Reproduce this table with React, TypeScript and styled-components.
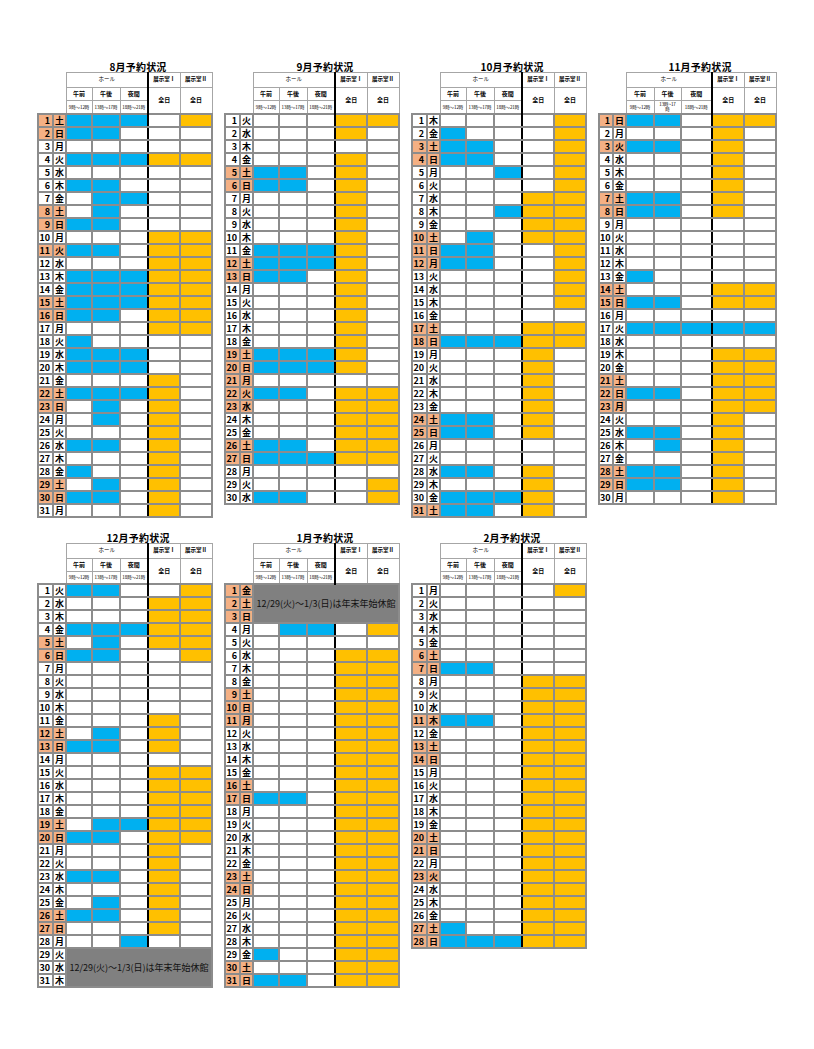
import React from 'react';
import styled, { createGlobalStyle } from 'styled-components';

const GlobalStyle = createGlobalStyle`
  html, body {
    margin: 0;
    padding: 0;
    background: #ffffff;
  }
  body {
    font-family: "Noto Sans CJK JP", "Liberation Sans", sans-serif;
    color: #000;
  }
`;

const BLUE = '#00b0f0';
const ORANGE = '#ffc000';
const HOLIDAY = '#f4b084';
const CLOSED = '#808080';
const GRID = '#8c8c8c';
const HEAD_GRID = '#a6a6a6';

const WEEKDAYS = ['日', '月', '火', '水', '木', '金', '土'];

type Month = {
  label: string;
  start: number; // weekday index of the 1st
  holidays: number[];
  rows: string; // one 5-char code per day: B blue, O orange, . empty, X closed
  wrapAfternoon?: boolean;
  cols?: number[];
};

const COL_WIDTHS = [15, 13, 26, 28, 28, 32, 32];

const MONTHS: Month[] = [
  {
    label: '8月',
    start: 6,
    holidays: [1, 2, 8, 9, 11, 15, 16, 22, 23, 29, 30],
    rows:
      'BBB.O BB... ..... BBBOO ..... BB... .BB.. .B... BB... ...OO ' +
      'BB.OO ...OO BBBOO BBBOO BBBOO BB.OO ...OO B.... BBB.. BBB.. ' +
      '...O. BBBO. .B.O. .B.O. ...O. BB.O. ...O. B..O. .B.O. BB.O. ...O.',
  },
  {
    label: '9月',
    start: 2,
    holidays: [5, 6, 12, 13, 19, 20, 21, 22, 23, 26, 27],
    rows:
      '...OO ...O. ..... ...O. BB.O. BB.O. ...O. ...O. ...O. ...O. ' +
      'BBBO. BBBO. BB.O. ...O. ...O. ...O. ...O. ...O. BBBO. BBBO. ' +
      '..... BB.OO ...OO ...OO ...OO BB.OO BBBOO ..... ....O BB..O',
  },
  {
    label: '10月',
    start: 4,
    holidays: [3, 4, 10, 11, 12, 17, 18, 24, 25, 31],
    rows:
      '....O B...O BB..O BB..O ..B.O ....O ...OO ..BOO ...OO .B.OO ' +
      'BB..O BB..O ....O ....O ....O ..... ...OO BBBOO ...O. ...O. ' +
      '...O. ...O. ...O. BB.O. BB.O. ..... ..... BB.O. ...O. BBBO. BB.O.',
  },
  {
    label: '11月',
    start: 0,
    holidays: [1, 3, 7, 8, 14, 15, 21, 22, 23, 28, 29],
    wrapAfternoon: true,
    cols: [14, 13, 28, 27, 31, 32, 32],
    rows:
      'BB.OO ...O. BB.O. ...O. ...O. ...O. BB.O. BB.O. ..... ..... ' +
      '..... ..... B.... ...OO BB.OO ..... BBBBB ..... ...OO ...OO ' +
      '...OO BB.OO ...OO ...O. BB.O. .B.O. ...O. BB.O. BB.O. ...O.',
  },
  {
    label: '12月',
    start: 2,
    holidays: [5, 6, 12, 13, 19, 20, 26, 27],
    rows:
      'BB..O ...OO ...OO BBBOO .B.OO BB..O ..... ..... ..... ..... ' +
      '...O. .B.O. BB.O. ..... ...OO ...OO ...OO ...OO .BBOO BB.OO ' +
      '...O. ...O. BB.O. ...O. .B.O. BB.O. ...O. ..B.. XXXXX XXXXX XXXXX',
  },
  {
    label: '1月',
    start: 5,
    holidays: [1, 2, 3, 9, 10, 11, 16, 17, 23, 24, 30, 31],
    rows:
      'XXXXX XXXXX XXXXX .BB.O ..... ...OO ...OO ...OO ...OO ...OO ' +
      '...OO ...OO ...OO ...OO ...OO ...OO BB.OO ...OO ...OO ...OO ' +
      '...OO ...OO ...OO ...OO ...OO ...OO ...OO ...OO B..OO ...OO BB.OO',
  },
  {
    label: '2月',
    start: 1,
    holidays: [6, 7, 11, 13, 14, 20, 21, 23, 27, 28],
    rows:
      '....O ..... ..... ..... ..... ..... BB... ...OO ...OO ...OO ' +
      'BB.OO ...OO ...OO ...OO ...OO ...OO ...OO ...OO ...OO ...OO ' +
      '...OO ...OO ...OO ...OO ...OO ...OO B..OO BBBOO',
  },
];

const CLOSED_NOTE = '12/29(火)～1/3(日)は年末年始休館';

const Page = styled.div`
  padding: 61px 0 40px 37px;
`;

const Sheet = styled.div`
  display: grid;
  grid-template-columns: repeat(4, 174px);
  column-gap: 13px;
  row-gap: 14px;
  align-items: start;
`;

const MonthBlock = styled.section<{ $width: number }>`
  display: flex;
  flex-direction: column;
  width: ${p => p.$width}px;
`;

const Title = styled.div<{ $indent: number }>`
  height: 11px;
  padding-left: ${p => p.$indent}px;
  text-align: center;
  font-size: 10px;
  line-height: 11px;
  font-weight: 700;
  letter-spacing: 0.2px;
`;

const Table = styled.table<{ $width: number }>`
  width: ${p => p.$width}px;
  table-layout: fixed;
  border-collapse: collapse;
  border-spacing: 0;
`;

const HeadRow = styled.tr<{ $h: number }>`
  height: ${p => p.$h}px;
`;

const Corner = styled.th`
  padding: 0;
  border: none;
`;

const HeadCell = styled.th<{ $size?: number; $divider?: boolean; $bold?: boolean }>`
  padding: 0;
  border: 1px solid ${HEAD_GRID};
  border-right: ${p => (p.$divider ? '2px solid #000' : `1px solid ${HEAD_GRID}`)};
  font-size: ${p => p.$size ?? 6}px;
  font-weight: ${p => (p.$bold === false ? 400 : 700)};
  line-height: 1;
  text-align: center;
  vertical-align: middle;
  white-space: nowrap;
  overflow: hidden;
`;

const TimeText = styled.span<{ $wrap?: boolean }>`
  display: inline-block;
  font-size: 4.5px;
  line-height: 4.6px;
  font-weight: 400;
  white-space: ${p => (p.$wrap ? 'normal' : 'nowrap')};
  letter-spacing: -0.1px;
`;

const BodyRow = styled.tr`
  height: 13px;
`;

const DayCell = styled.td<{ $holiday: boolean }>`
  padding: 0 2px 0 0;
  height: 11px;
  border: 2px solid ${GRID};
  background: ${p => (p.$holiday ? HOLIDAY : '#fff')};
  font-size: 9px;
  line-height: 9px;
  font-weight: 700;
  text-align: right;
  vertical-align: middle;
  white-space: nowrap;
`;

const WeekdayCell = styled(DayCell)`
  padding: 0;
  text-align: center;
`;

const SlotCell = styled.td<{ $fill: string; $divider?: boolean }>`
  padding: 0;
  height: 11px;
  border: 2px solid ${GRID};
  border-right: ${p => (p.$divider ? '2px solid #000' : `2px solid ${GRID}`)};
  background: ${p => (p.$fill === 'B' ? BLUE : p.$fill === 'O' ? ORANGE : '#fff')};
`;

const ClosedCell = styled.td`
  padding: 0;
  border: 2px solid ${GRID};
  background: ${CLOSED};
  font-size: 9px;
  font-weight: 400;
  color: #111;
  text-align: center;
  vertical-align: middle;
  white-space: nowrap;
`;

const MonthTable: React.FC<{ month: Month }> = ({ month }) => {
  const days = month.rows.split(' ');
  const cols = month.cols ?? COL_WIDTHS;
  const width = cols.reduce((a, b) => a + b, 0);

  return (
    <MonthBlock $width={width}>
      <Title $indent={cols[0] + cols[1]}>{month.label}予約状況</Title>
      <Table $width={width}>
        <colgroup>
          {cols.map((w, i) => (
            <col key={i} style={{ width: w }} />
          ))}
        </colgroup>
        <thead>
          <HeadRow $h={15}>
            <Corner rowSpan={3} colSpan={2} />
            <HeadCell colSpan={3} $size={5.5} $bold={false} $divider>
              ホール
            </HeadCell>
            <HeadCell $size={5.5}>展示室Ⅰ</HeadCell>
            <HeadCell $size={5.5}>展示室Ⅱ</HeadCell>
          </HeadRow>
          <HeadRow $h={13}>
            <HeadCell>午前</HeadCell>
            <HeadCell>午後</HeadCell>
            <HeadCell $divider>夜間</HeadCell>
            <HeadCell rowSpan={2}>全日</HeadCell>
            <HeadCell rowSpan={2}>全日</HeadCell>
          </HeadRow>
          <HeadRow $h={13}>
            <HeadCell>
              <TimeText>9時～12時</TimeText>
            </HeadCell>
            <HeadCell>
              {month.wrapAfternoon ? (
                <TimeText $wrap>
                  13時~17
                  <br />時
                </TimeText>
              ) : (
                <TimeText>13時～17時</TimeText>
              )}
            </HeadCell>
            <HeadCell $divider>
              <TimeText>18時～21時</TimeText>
            </HeadCell>
          </HeadRow>
        </thead>
        <tbody>
          {days.map((code, i) => {
            const day = i + 1;
            const holiday = month.holidays.includes(day);
            const weekday = WEEKDAYS[(month.start + i) % 7];
            const closed = code === 'XXXXX';
            const closedStart = closed && (i === 0 || days[i - 1] !== 'XXXXX');
            let span = 0;
            if (closedStart) {
              while (days[i + span] === 'XXXXX') span++;
            }
            return (
              <BodyRow key={day}>
                <DayCell $holiday={holiday}>{day}</DayCell>
                <WeekdayCell $holiday={holiday}>{weekday}</WeekdayCell>
                {closedStart && (
                  <ClosedCell colSpan={5} rowSpan={span}>
                    {CLOSED_NOTE}
                  </ClosedCell>
                )}
                {!closed &&
                  code
                    .split('')
                    .map((c, j) => <SlotCell key={j} $fill={c} $divider={j === 2} />)}
              </BodyRow>
            );
          })}
        </tbody>
      </Table>
    </MonthBlock>
  );
};

const App: React.FC = () => (
  <>
    <GlobalStyle />
    <Page>
      <Sheet>
        {MONTHS.map(m => (
          <MonthTable key={m.label} month={m} />
        ))}
      </Sheet>
    </Page>
  </>
);

export default App;
